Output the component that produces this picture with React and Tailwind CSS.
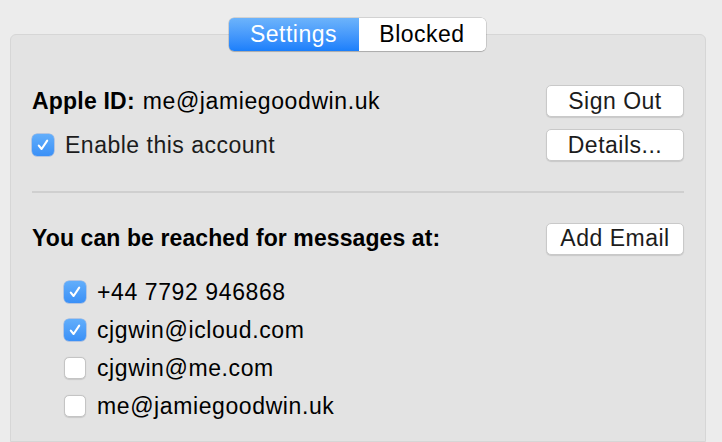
import React from "react";

const font = { fontFamily: '"Liberation Sans", Arial, sans-serif' };

function Check({ checked }) {
  if (checked) {
    return (
      <div className="w-[22px] h-[22px] rounded-[5px] bg-gradient-to-b from-[#62aefb] to-[#3a90f7] shadow-[0_0_0_0.5px_rgba(40,110,220,0.5)] flex items-center justify-center shrink-0">
        <svg width="14" height="14" viewBox="0 0 14 14">
          <path d="M2.8 7.6 L5.6 11 L11.2 2.6" fill="none" stroke="white" strokeWidth="2.1" strokeLinecap="round" strokeLinejoin="round" />
        </svg>
      </div>
    );
  }
  return (
    <div className="w-[22px] h-[22px] rounded-[5px] bg-white border border-[#c4c4c4] shadow-[0_0.5px_1px_rgba(0,0,0,0.12)] shrink-0" />
  );
}

function Btn({ children }) {
  return (
    <div className="w-[138px] h-[32px] rounded-[5px] bg-white border border-[#c9c9c9] shadow-[0_1px_1px_rgba(0,0,0,0.12)] flex items-center justify-center text-[23px] text-[#1c1c1c] tracking-[0.5px]">
      {children}
    </div>
  );
}

export default function App() {
  const rows = [
    { label: "+44 7792 946868", checked: true },
    { label: "cjgwin@icloud.com", checked: true },
    { label: "cjgwin@me.com", checked: false },
    { label: "me@jamiegoodwin.uk", checked: false },
  ];
  return (
    <div className="w-[722px] h-[442px] bg-[#ececec] overflow-hidden flex flex-col" style={font}>
      <div className="pt-[18px] pr-[8px] flex justify-center relative z-10">
        <div className="flex h-[33px] rounded-[5px] shadow-[0_0_0_0.5px_rgba(0,0,0,0.22),0_1px_1px_rgba(0,0,0,0.15)] overflow-hidden text-[23px] tracking-[0.5px]">
          <div className="w-[130px] bg-gradient-to-b from-[#6cb3fb] to-[#1a7ffb] text-white flex items-center justify-center">
            Settings
          </div>
          <div className="w-[127px] bg-white text-black flex items-center justify-center">
            Blocked
          </div>
        </div>
      </div>
      <div className="-mt-[17px] mx-[10px] w-[696px] flex-1 rounded-t-[6px] border border-[#d6d6d6] bg-[#e3e3e3] pt-[50px] px-[21px]">
        <div className="flex items-center justify-between h-[32px]">
          <div className="text-[23px] text-black tracking-[0.6px] flex items-center">
            <span className="font-bold tracking-[0.2px]">Apple ID:</span>
            <span className="ml-[8px]">me@jamiegoodwin.uk</span>
          </div>
          <Btn>Sign Out</Btn>
        </div>
        <div className="flex items-center justify-between h-[32px] mt-[12px]">
          <div className="flex items-center gap-[11px] text-[23px] text-[#1c1c1c] tracking-[0.5px]">
            <Check checked />
            <span>Enable this account</span>
          </div>
          <Btn>Details...</Btn>
        </div>
        <div className="h-[2px] bg-[#cfcfcf] mt-[30px] mb-[29px]" />
        <div className="flex items-center justify-between h-[33px]">
          <div className="text-[23px] font-bold text-black tracking-[0.1px]">
            You can be reached for messages at:
          </div>
          <Btn>Add Email</Btn>
        </div>
        <div className="mt-[18px] pl-[32px] flex flex-col">
          {rows.map((r) => (
            <div key={r.label} className="h-[38px] flex items-center gap-[11px] text-[23px] text-black tracking-[0.6px]">
              <Check checked={r.checked} />
              <span>{r.label}</span>
            </div>
          ))}
        </div>
      </div>
    </div>
  );
}
